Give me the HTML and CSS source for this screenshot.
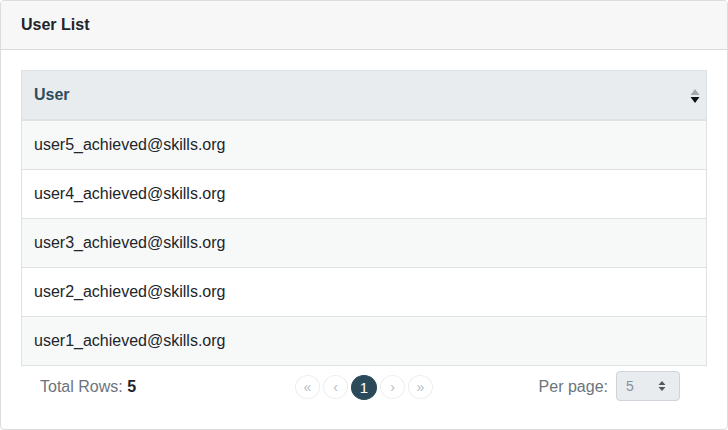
FILE: index.html
```html
<!DOCTYPE html>
<html>
<head>
<meta charset="utf-8">
<link rel="stylesheet" href="styles.css">
</head>
<body>
<div class="card">
  <div class="card-header">User List</div>
  <div class="card-body">
    <table class="users">
      <thead>
        <tr>
          <th>
            <div class="th-inner">
              <span>User</span>
              <svg class="sort" width="10" height="16" viewBox="0 0 10 16">
                <path d="M5 1 L9.5 7 L0.5 7 Z" fill="#a6a6a6"/>
                <path d="M5 15 L9.5 9 L0.5 9 Z" fill="#111"/>
              </svg>
            </div>
          </th>
        </tr>
      </thead>
      <tbody>
        <tr><td>user5_achieved@skills.org</td></tr>
        <tr><td>user4_achieved@skills.org</td></tr>
        <tr><td>user3_achieved@skills.org</td></tr>
        <tr><td>user2_achieved@skills.org</td></tr>
        <tr><td>user1_achieved@skills.org</td></tr>
      </tbody>
    </table>
    <div class="footer">
      <div class="total">Total Rows: <strong>5</strong></div>
      <div class="pager">
        <span class="pg">«</span>
        <span class="pg">‹</span>
        <span class="pg active">1</span>
        <span class="pg">›</span>
        <span class="pg">»</span>
      </div>
      <div class="perpage">
        <span class="pp-label">Per page:</span>
        <div class="select">
          <span>5</span>
          <svg width="8" height="12" viewBox="0 0 8 12">
            <path d="M4 1 L7.5 5 L0.5 5 Z" fill="#555"/>
            <path d="M4 11 L7.5 7 L0.5 7 Z" fill="#555"/>
          </svg>
        </div>
      </div>
    </div>
  </div>
</div>
</body>
</html>
```
FILE: styles.css
```css
* { box-sizing: border-box; }
html, body { margin: 0; padding: 0; }
body {
  font-family: "Liberation Sans", Arial, sans-serif;
  color: #212529;
  background: #fff;
}
.card {
  width: 728px;
  height: 430px;
  border: 1px solid #dcdcdc;
  border-radius: 4px;
  overflow: hidden;
  background: #fff;
}
.card-header {
  height: 49px;
  background: #f7f7f7;
  border-bottom: 1px solid #dcdcdc;
  padding: 0 20px;
  font-size: 16px;
  font-weight: bold;
  line-height: 48px;
  color: #212529;
}
.card-body {
  padding: 20px 20px 0 20px;
}
.users {
  width: 100%;
  border-collapse: separate;
  border-spacing: 0;
  border: 1px solid #dee2e6;
}
.users th {
  background: #e9ecef;
  color: #2d4d5c;
  font-size: 16px;
  font-weight: bold;
  text-align: left;
  padding: 12px 6px 12px 12px;
  line-height: 24px;
  border-bottom: 2px solid #dee2e6;
}
.th-inner {
  display: flex;
  align-items: center;
  justify-content: space-between;
}
.sort { display: block; margin-top: 1px; }
.users td {
  font-size: 16px;
  padding: 12px;
  line-height: 24px;
  border-bottom: 1px solid #dee2e6;
}
.users tbody tr:last-child td { border-bottom: none; }
.users tbody tr:nth-child(odd) td { background: #f7f9f9; }
.footer {
  display: grid;
  grid-template-columns: 1fr 1fr 1fr;
  align-items: center;
  height: 42px;
}
.total {
  color: #6c757d;
  font-size: 16px;
  margin-left: 19px;
}
.total strong { color: #212529; }
.pager {
  display: flex;
  justify-content: center;
  gap: 3px;
}
.pg {
  width: 25px;
  height: 24px;
  border-radius: 50%;
  border: 1px solid #eceff1;
  color: #b5bcc2;
  font-size: 14px;
  display: flex;
  align-items: center;
  justify-content: center;
  line-height: 1;
}
.pg.active {
  background: #2a4a5a;
  border-color: #2a4a5a;
  color: #fff;
  font-size: 15px;
  width: 26px;
  height: 25px;
}
.perpage {
  display: flex;
  justify-content: flex-end;
  align-items: center;
  gap: 8px;
  margin-right: 27px;
}
.pp-label {
  color: #6c757d;
  font-size: 16px;
}
.select {
  width: 64px;
  height: 30px;
  margin-bottom: 3px;
  background: #e9ecef;
  border: 1px solid #ced4da;
  border-radius: 4px;
  display: flex;
  align-items: center;
  justify-content: space-between;
  padding: 0 13px 0 9px;
  color: #8a9196;
  font-size: 14px;
}
.select svg { display: block; }
```
